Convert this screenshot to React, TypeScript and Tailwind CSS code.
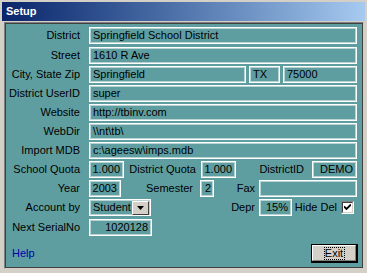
import React from "react";

const font = { fontFamily: '"Liberation Sans", Arial, sans-serif' };

function Field({
  w,
  children,
  right,
  className = "",
}: {
  w: string;
  children?: React.ReactNode;
  right?: boolean;
  className?: string;
}) {
  return (
    <div
      className={`${w} h-[17px] border border-white shadow-[inset_0_0_0_1px_#b9d3d3] flex items-center px-[3px] whitespace-nowrap overflow-hidden ${
        right ? "justify-end" : ""
      } ${className}`}
    >
      {children}
    </div>
  );
}

function Label({ w, children, pr = "" }: { w: string; children: React.ReactNode; pr?: string }) {
  return <div className={`${w} ${pr} text-right whitespace-nowrap shrink-0`}>{children}</div>;
}

export default function App() {
  return (
    <div
      className="w-[367px] h-[273px] bg-[#d4d0c8] px-[2px] pt-[2px] text-[11px] text-black overflow-hidden"
      style={font}
    >
      <div className="h-[19px] bg-gradient-to-r from-[#0a246a] to-[#a6caf0] flex items-center pl-[4px] text-white font-bold text-[11px]">
        Setup
      </div>
      <div className="mt-[1px] ml-[2px] mr-[1px] h-[247px] border border-t-[#808080] border-l-[#808080] border-r-[#d4d0c8] border-b-[#d4d0c8]">
        <div className="h-full border border-[#404040] bg-[#5f9ea0] flex flex-col">
          <div className="flex items-center mt-[3px]">
            <Label w="w-[74px]">District</Label>
            <Field w="w-[268px] ml-[9px]">Springfield School District</Field>
          </div>
          <div className="flex items-center mt-[3px]">
            <Label w="w-[74px]">Street</Label>
            <Field w="w-[268px] ml-[9px]">1610 R Ave</Field>
          </div>
          <div className="flex items-center mt-[2px]">
            <Label w="w-[74px]">City, State Zip</Label>
            <Field w="w-[157px] ml-[9px]">Springfield</Field>
            <Field w="w-[31px] ml-[3px]">TX</Field>
            <Field w="w-[74px] ml-[3px]">75000</Field>
          </div>
          <div className="flex items-center mt-[2px]">
            <Label w="w-[74px]">District UserID</Label>
            <Field w="w-[268px] ml-[9px]">super</Field>
          </div>
          <div className="flex items-center mt-[2px]">
            <Label w="w-[74px]">Website</Label>
            <Field w="w-[268px] ml-[9px]">http://tbinv.com</Field>
          </div>
          <div className="flex items-center mt-[2px]">
            <Label w="w-[74px]">WebDir</Label>
            <Field w="w-[268px] ml-[9px]">\\nt\tb\</Field>
          </div>
          <div className="flex items-center mt-[2px]">
            <Label w="w-[74px]">Import MDB</Label>
            <Field w="w-[268px] ml-[9px]">c:\ageesw\imps.mdb</Field>
          </div>
          <div className="flex items-center mt-[2px]">
            <Label w="w-[74px]">School Quota</Label>
            <Field w="w-[35px] ml-[9px]" right>
              1.000
            </Field>
            <Label w="w-[77px]" pr="pr-[5px]">
              District Quota
            </Label>
            <Field w="w-[35px]" right>
              1.000
            </Field>
            <Label w="w-[76px]" pr="pr-[8px]">
              DistrictID
            </Label>
            <Field w="w-[45px]" right>
              DEMO
            </Field>
          </div>
          <div className="flex items-center mt-[2px]">
            <Label w="w-[74px]">Year</Label>
            <Field w="w-[32px] ml-[9px]" right>
              2003
            </Field>
            <Label w="w-[79px]" pr="pr-[7px]">
              Semester
            </Label>
            <Field w="w-[14px]" right className="!px-[2px]">
              2
            </Field>
            <Label w="w-[45px]" pr="pr-[4px]">
              Fax
            </Label>
            <Field w="w-[98px]" />
          </div>
          <div className="flex items-center mt-[2px]">
            <Label w="w-[74px]">Account by</Label>
            <div className="w-[62px] ml-[9px] h-[17px] border border-white shadow-[inset_0_0_0_1px_#b9d3d3] flex items-center pl-[3px]">
              <span>Student</span>
              <div className="ml-auto mr-[1px] w-[17px] h-[14px] bg-[#d4d0c8] border border-t-white border-l-white border-r-[#404040] border-b-[#404040] flex items-center justify-center">
                <svg width="7" height="4" viewBox="0 0 7 4">
                  <path d="M0 0h7L3.5 4z" fill="#000" />
                </svg>
              </div>
            </div>
            <Label w="w-[108px]" pr="pr-[4px]">
              Depr
            </Label>
            <Field w="w-[33px]" right>
              15%
            </Field>
            <Label w="w-[49px]" pr="pr-[4px]">
              Hide Del
            </Label>
            <div className="w-[13px] h-[13px] border border-t-[#808080] border-l-[#808080] border-r-white border-b-white">
              <div className="w-full h-full bg-white border border-t-[#404040] border-l-[#404040] border-r-[#d4d0c8] border-b-[#d4d0c8] flex items-center justify-center">
                <svg width="7" height="7" viewBox="0 0 7 7">
                  <path d="M0 2.5l2.5 2.5L7 0.5" stroke="#000" strokeWidth="1.8" fill="none" />
                </svg>
              </div>
            </div>
          </div>
          <div className="flex items-center mt-[3px]">
            <Label w="w-[74px]">Next SerialNo</Label>
            <Field w="w-[63px] ml-[9px]" right>
              1020128
            </Field>
          </div>
          <div className="flex items-center justify-between mt-[8px] h-[19px] pl-[6px] pr-[4px]">
            <span className="text-[#0000b0]">Help</span>
            <div className="w-[47px] h-[19px] border border-black border-r-2 border-b-2 bg-[#d4d0c8]">
              <div className="w-full h-full border border-t-white border-l-white border-r-[#808080] border-b-[#808080] flex items-center justify-center">
                <span className="border border-dotted border-black w-[21px] h-[13px] flex items-center justify-center leading-none">
                  Exit
                </span>
              </div>
            </div>
          </div>
        </div>
      </div>
    </div>
  );
}
